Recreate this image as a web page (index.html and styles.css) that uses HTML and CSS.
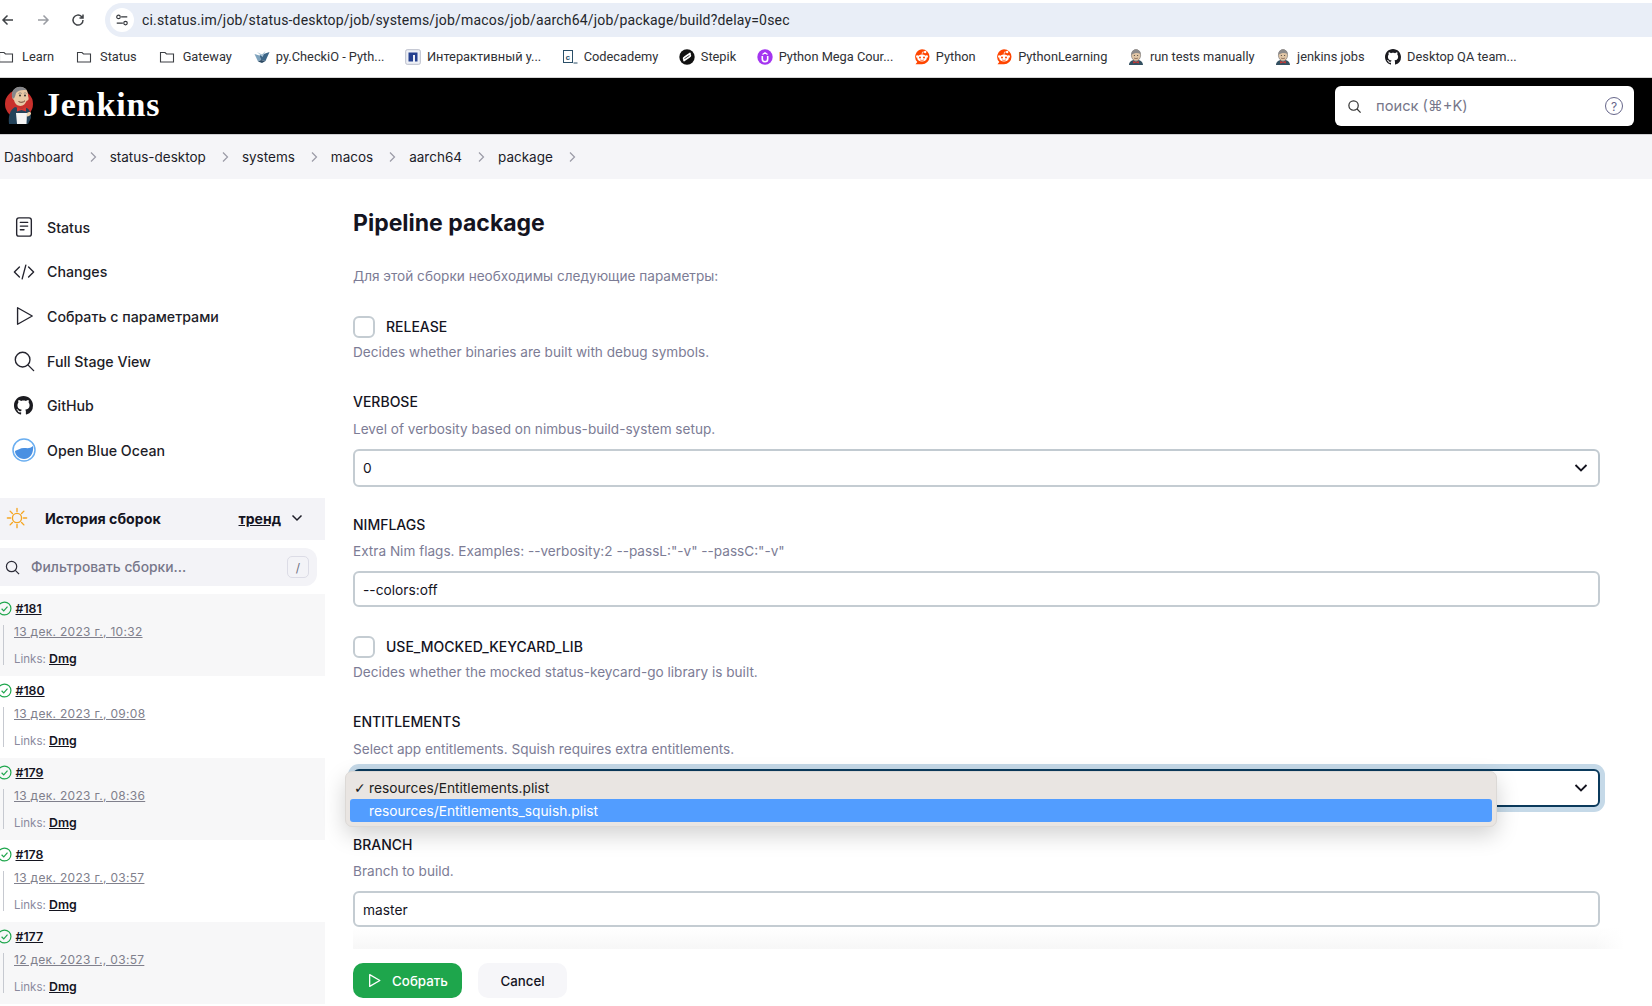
FILE: index.html
```html
<!DOCTYPE html>
<html lang="ru">
<head>
<meta charset="utf-8">
<title>package [Jenkins]</title>
<link rel="stylesheet" href="styles.css">
</head>
<body>
<div class="chrome">
  <div class="nav-btns">
    <svg class="nav-ic" viewBox="0 0 16 16"><path d="M13 8H3M7.500 3.500 3 8l4.500 4.500"/></svg>
    <svg class="nav-ic dim" viewBox="0 0 16 16"><path d="M3 8h10M8.500 3.500 13 8l-4.500 4.500"/></svg>
    <svg class="nav-ic" viewBox="0 0 16 16"><path d="M13 8a5 5 0 1 1-1.500-3.500L13 6M13 2.500V6H9.500"/></svg>
  </div>
  <div class="omnibox">
    <span class="site-ic"><svg viewBox="0 0 16 16"><path d="M7 4.500h7M2 11.500h7"/><circle cx="4" cy="4.500" r="2"/><circle cx="12" cy="11.500" r="2"/></svg></span>
    <span class="url">ci.status.im/job/status-desktop/job/systems/job/macos/job/aarch64/job/package/build?delay=0sec</span>
  </div>
</div>
<div class="bookmarks">
  <a class="bm first fold"><svg class="bi folder" viewBox="0 0 16 16"><path d="M1.500 3.500h4.500l1.500 1.500h7v8h-13z"/></svg>Learn</a>
  <a class="bm fold"><svg class="bi folder" viewBox="0 0 16 16"><path d="M1.500 3.500h4.500l1.500 1.500h7v8h-13z"/></svg>Status</a>
  <a class="bm fold"><svg class="bi folder" viewBox="0 0 16 16"><path d="M1.500 3.500h4.500l1.500 1.500h7v8h-13z"/></svg>Gateway</a>
  <a class="bm"><svg class="bi" viewBox="0 0 16 16"><path fill="#7fa3bd" d="M.5 5l5 1.500L7 11l-3 1.500z"/><path fill="#3d6688" d="M5.500 6.500 15.500 3l-4 9L7 11z"/><path fill="#a9c4d6" d="M3 3l5 2.500 3.500-3.500-3 6z"/><path fill="#2c4a63" d="M4 12.500 7 11l4.500 1-3.500 2z"/></svg>py.CheckiO - Pyth...</a>
  <a class="bm"><svg class="bi" viewBox="0 0 16 16"><rect x=".7" y=".7" width="14.600" height="14.600" rx="1.500" fill="#eef0f6" stroke="#b9bdca"/><path fill="#25408f" d="M3.500 3.500h9v9h-2.500V6H8v6.500H3.500z"/></svg>Интерактивный у...</a>
  <a class="bm"><svg class="bi" viewBox="0 0 16 16"><rect x="1.500" y="1.500" width="9" height="12" fill="#fff" stroke="#2a4f68"/><path d="M11.500 14H15.500" stroke="#2a4f68" fill="none"/><text x="3.500" y="10.500" class="cc">c</text></svg>Codecademy</a>
  <a class="bm"><svg class="bi" viewBox="0 0 16 16"><circle cx="8" cy="8" r="7.700" fill="#111"/><path fill="none" stroke="#fff" stroke-width="1.700" stroke-linecap="round" d="M11 4.500 5.500 8.300a1.400 1.400 0 0 0 .5 2.700M5 11.500 10.500 7.700a1.400 1.400 0 0 0-.5-2.700"/></svg>Stepik</a>
  <a class="bm"><svg class="bi" viewBox="0 0 16 16"><circle cx="8" cy="8" r="7.700" fill="#a435f0"/><path fill="none" stroke="#fff" stroke-width="1.600" d="M5.300 7v3a2.700 2.700 0 0 0 5.400 0V7"/><path fill="none" stroke="#fff" stroke-width="1.300" d="M5.500 5.500 8 3.800l2.500 1.700"/></svg>Python Mega Cour...</a>
  <a class="bm"><svg class="bi" viewBox="0 0 16 16"><use href="#reddit"/></svg>Python</a>
  <a class="bm"><svg class="bi" viewBox="0 0 16 16"><use href="#reddit"/></svg>PythonLearning</a>
  <a class="bm"><svg class="bi" viewBox="0 0 16 16"><use href="#butler"/></svg>run tests manually</a>
  <a class="bm"><svg class="bi" viewBox="0 0 16 16"><use href="#butler"/></svg>jenkins jobs</a>
  <a class="bm"><svg class="bi" viewBox="0 0 16 16"><use href="#gh"/></svg>Desktop QA team...</a>
</div>
<svg class="defs" aria-hidden="true">
  <defs>
    <symbol id="reddit" viewBox="0 0 16 16">
      <path fill="#ff4500" d="M8 .3a7.500 7.500 0 0 1 0 15H1.500l1.800-2.300A7.500 7.500 0 0 1 8 .3z"/>
      <circle cx="3.300" cy="7.500" r="1.300" fill="#fff"/><circle cx="12.700" cy="7.500" r="1.300" fill="#fff"/>
      <ellipse cx="8" cy="9" rx="4.800" ry="3.600" fill="#fff"/>
      <circle cx="6" cy="8.500" r="1" fill="#ff4500"/><circle cx="10" cy="8.500" r="1" fill="#ff4500"/>
      <circle cx="11.200" cy="3" r="1.200" fill="#fff"/>
      <path d="M8 5.500 8.500 3l2.700.0" fill="none" stroke="#fff" stroke-width=".7"/>
      <path d="M6 10.800c1 .8 3 .8 4 0" fill="none" stroke="#ff4500" stroke-width=".7"/>
    </symbol>
    <symbol id="butler" viewBox="0 0 16 16">
      <path fill="#335061" d="M1 16c0-3 2.500-4.500 4.500-5l2.500 1.500 2.500-1.500c2 .5 4.500 2 4.500 5z"/>
      <ellipse cx="8" cy="6.200" rx="4.600" ry="5.700" fill="#e0c5a5" stroke="#6d6b6d" stroke-width=".6"/>
      <path fill="#8c8a8a" d="M3.500 6C3 2 5.500.4 8 .4s5 1.600 4.500 4.600C10 3.500 6.500 3.500 3.500 6z"/>
      <path fill="#d33833" d="M5.200 12 8 13l2.800-1v2.500L8 13.500l-2.800 1z"/>
      <circle cx="6.300" cy="6.500" r=".5" fill="#222"/><circle cx="9.700" cy="6.500" r=".5" fill="#222"/>
      <path d="M6 9c1 .7 3 .7 4 0" fill="none" stroke="#6b4a3a" stroke-width=".6"/>
    </symbol>
    <symbol id="gh" viewBox="0 0 16 16">
      <path fill="#1b1b20" d="M8 0C3.580 0 0 3.580 0 8c0 3.540 2.290 6.530 5.470 7.590.4.070.55-.17.55-.38 0-.19-.01-.82-.01-1.490-2.010.37-2.530-.49-2.690-.94-.09-.23-.48-.94-.82-1.130-.28-.15-.68-.52-.01-.53.63-.01 1.080.58 1.230.82.720 1.210 1.870.87 2.330.66.070-.52.280-.87.510-1.070-1.780-.2-3.640-.89-3.640-3.950 0-.87.310-1.590.820-2.150-.08-.2-.36-1.020.08-2.120 0 0 .67-.21 2.200.82.640-.18 1.320-.27 2-.27s1.360.09 2 .27c1.530-1.040 2.200-.82 2.200-.82.44 1.100.16 1.920.08 2.120.51.560.82 1.270.82 2.150 0 3.070-1.870 3.750-3.650 3.950.29.250.54.730.54 1.480 0 1.070-.01 1.930-.01 2.200 0 .21.150.46.550.38A8.013 8.013 0 0 0 16 8c0-4.420-3.580-8-8-8z"/>
    </symbol>
  </defs>
</svg>
<header class="jk-head">
  <a class="brand">
    <svg class="butler-logo" viewBox="0 0 30 40">
      <circle cx="15" cy="18" r="14" fill="#c9302c"/>
      <path fill="#24435a" d="M5 38c-1-8 1-14 6-17l6 2 6-1c3 2 4 6 4 10l-3 6z"/>
      <path fill="#e8c9a6" d="M8 10C8 4 12 1 16 1s8 2 8 8c0 1.500 1 3 .5 4.500-.5 1-1.500 1-2 1.500-1 2.500-3 5-6 5-3.500 0-6-3-6.500-6C9 13.500 8 12 8 10z"/>
      <path fill="#85868a" d="M8 11C7 5 11 .8 16 .8c3 0 5.500 1.200 6.500 3.500C18 3.500 14 4.500 12 7c-.5 2-1 4-2 5.500-.8 0-1.700-.5-2-1.500z"/>
      <circle cx="16" cy="9.500" r=".9" fill="#222"/><circle cx="21" cy="9.500" r=".9" fill="#222"/>
      <path d="M14.500 15.500c2 1.300 5 1 6.500-.8" fill="none" stroke="#6b3f2f" stroke-width="1"/>
      <path fill="#e8e8e8" d="M14.500 7.500c1-.7 2.500-.7 3.200 0M19.800 7.300c1-.5 2-.5 2.700.2" stroke="#444" stroke-width=".5"/>
      <path fill="#d33833" d="M13 21l4.500 2 4.500-2v4.500L17.500 24 13 25.500z"/>
      <path fill="#f4f4f4" d="M12 27h11l-.5 11H13z"/>
      <path fill="#eed2ae" d="M23 27c2-1.500 4-1 4 .5s-2 3-4 3z"/>
    </svg>
    <span class="brand-name">Jenkins</span>
  </a>
  <div class="search">
    <svg class="ic-search" viewBox="0 0 16 16"><circle cx="7" cy="7" r="5"/><path d="m10.700 10.700 3.800 3.800"/></svg>
    <span class="search-ph">поиск (⌘+K)</span>
    <span class="help">?</span>
  </div>
</header>
<nav class="crumbs">
  <a>Dashboard</a><svg class="sep" viewBox="0 0 8 12"><path d="m2 1.500 4.500 4.500L2 10.500"/></svg>
  <a>status-desktop</a><svg class="sep" viewBox="0 0 8 12"><path d="m2 1.500 4.500 4.500L2 10.500"/></svg>
  <a>systems</a><svg class="sep" viewBox="0 0 8 12"><path d="m2 1.500 4.500 4.500L2 10.500"/></svg>
  <a>macos</a><svg class="sep" viewBox="0 0 8 12"><path d="m2 1.500 4.500 4.500L2 10.500"/></svg>
  <a>aarch64</a><svg class="sep" viewBox="0 0 8 12"><path d="m2 1.500 4.500 4.500L2 10.500"/></svg>
  <a>package</a><svg class="sep" viewBox="0 0 8 12"><path d="m2 1.500 4.500 4.500L2 10.500"/></svg>
</nav>
<div class="page">
  <aside class="side">
    <ul class="tasks">
      <li class="task"><span class="task-ic"><svg viewBox="0 0 24 24" class="line"><rect x="4" y="2" width="16" height="20" rx="2.500"/><path d="M8 7h8M8 11h8M8 15h4"/></svg></span>Status</li>
      <li class="task"><span class="task-ic"><svg viewBox="0 0 24 24" class="line"><path d="M7 6.500 1.500 12 7 17.500M17 6.500l5.500 5.500-5.500 5.500M14 4.500 10 19.500"/></svg></span>Changes</li>
      <li class="task"><span class="task-ic"><svg viewBox="0 0 24 24" class="line"><path d="M5 3 21 12 5 21z"/></svg></span>Собрать с параметрами</li>
      <li class="task"><span class="task-ic"><svg viewBox="0 0 24 24" class="line"><circle cx="10.500" cy="10.500" r="8"/><path d="m16.500 16.500 6 6"/></svg></span>Full Stage View</li>
      <li class="task"><span class="task-ic"><svg class="gh-ic" viewBox="0 0 16 16"><use href="#gh"/></svg></span>GitHub</li>
      <li class="task"><span class="task-ic"><svg viewBox="0 0 24 24"><circle cx="12" cy="12" r="11" fill="#fff" stroke="#6aaef0" stroke-width="1.500"/><path fill="#4a90e2" d="M3 13c3-1 5-3 9-3 3 0 6 1 9-2 1 7-3 13-9 13-5 0-9-4-9-8z"/></svg></span>Open Blue Ocean</li>
    </ul>
    <div class="hist-head">
      <svg class="sun" viewBox="0 0 24 24"><circle cx="12" cy="12" r="5"/><path d="M12 1.500v3.500M12 19v3.500M1.500 12H5M19 12h3.500M4.500 4.500 7 7M17 17l2.500 2.500M19.500 4.500 17 7M7 17l-2.500 2.500"/></svg>
      <span class="hist-title">История сборок</span>
      <a class="trend">тренд</a>
      <svg class="chev-sm" viewBox="0 0 12 12"><path d="m1.500 3.500 4.500 4.500 4.500-4.500"/></svg>
    </div>
    <div class="filter">
      <svg class="ic-search" viewBox="0 0 16 16"><circle cx="7" cy="7" r="5.500"/><path d="m11 11 4 4"/></svg>
      <span class="filter-ph">Фильтровать сборки...</span>
      <kbd class="kbd">/</kbd>
    </div>
    <div class="builds">
      <article class="build alt">
        <div class="b-top"><svg class="ok" viewBox="0 0 14 14"><circle cx="7" cy="7" r="6"/><path d="m4.300 7.200 2 2 3.500-4"/></svg><a class="b-num">#181</a></div>
        <div class="b-det"><a class="b-date">13 дек. 2023 г., 10:32</a><p class="b-links">Links: <a>Dmg</a></p></div>
      </article>
      <article class="build">
        <div class="b-top"><svg class="ok" viewBox="0 0 14 14"><circle cx="7" cy="7" r="6"/><path d="m4.300 7.200 2 2 3.500-4"/></svg><a class="b-num">#180</a></div>
        <div class="b-det"><a class="b-date">13 дек. 2023 г., 09:08</a><p class="b-links">Links: <a>Dmg</a></p></div>
      </article>
      <article class="build alt">
        <div class="b-top"><svg class="ok" viewBox="0 0 14 14"><circle cx="7" cy="7" r="6"/><path d="m4.300 7.200 2 2 3.500-4"/></svg><a class="b-num">#179</a></div>
        <div class="b-det"><a class="b-date">13 дек. 2023 г., 08:36</a><p class="b-links">Links: <a>Dmg</a></p></div>
      </article>
      <article class="build">
        <div class="b-top"><svg class="ok" viewBox="0 0 14 14"><circle cx="7" cy="7" r="6"/><path d="m4.300 7.200 2 2 3.500-4"/></svg><a class="b-num">#178</a></div>
        <div class="b-det"><a class="b-date">13 дек. 2023 г., 03:57</a><p class="b-links">Links: <a>Dmg</a></p></div>
      </article>
      <article class="build alt">
        <div class="b-top"><svg class="ok" viewBox="0 0 14 14"><circle cx="7" cy="7" r="6"/><path d="m4.300 7.200 2 2 3.500-4"/></svg><a class="b-num">#177</a></div>
        <div class="b-det"><a class="b-date">12 дек. 2023 г., 03:57</a><p class="b-links">Links: <a>Dmg</a></p></div>
      </article>
    </div>
  </aside>
  <main class="main">
    <div class="form">
      <h1 class="title">Pipeline package</h1>
      <p class="desc intro">Для этой сборки необходимы следующие параметры:</p>
      <div class="check-row"><span class="cb"></span><span class="lbl">RELEASE</span></div>
      <p class="desc after-check">Decides whether binaries are built with debug symbols.</p>
      <div class="lbl head">VERBOSE</div>
      <p class="desc sub">Level of verbosity based on nimbus-build-system setup.</p>
      <div class="field sel tall">0<svg class="chev" viewBox="0 0 14 10"><path d="m1.500 2 5.500 5.500L12.500 2"/></svg></div>
      <div class="lbl head">NIMFLAGS</div>
      <p class="desc sub">Extra Nim flags. Examples: --verbosity:2 --passL:"-v" --passC:"-v"</p>
      <div class="field">--colors:off</div>
      <div class="check-row"><span class="cb"></span><span class="lbl">USE_MOCKED_KEYCARD_LIB</span></div>
      <p class="desc after-check">Decides whether the mocked status-keycard-go library is built.</p>
      <div class="lbl head">ENTITLEMENTS</div>
      <p class="desc sub">Select app entitlements. Squish requires extra entitlements.</p>
      <div class="select-wrap">
        <div class="field sel focus"><svg class="chev" viewBox="0 0 14 10"><path d="m1.500 2 5.500 5.500L12.500 2"/></svg></div>
        <div class="menu">
          <div class="opt"><span class="tick">✓</span>resources/Entitlements.plist</div>
          <div class="opt hl">resources/Entitlements_squish.plist</div>
        </div>
      </div>
      <div class="lbl head">BRANCH</div>
      <p class="desc sub">Branch to build.</p>
      <div class="field">master</div>
    </div>
    <div class="actions">
      <button class="btn primary"><svg class="btn-ic" viewBox="0 0 14 14"><path d="M2.500 1.500 12 7l-9.500 5.500z"/></svg>Собрать</button>
      <button class="btn">Cancel</button>
    </div>
  </main>
</div>
</body>
</html>
```
FILE: styles.css
```css
* { box-sizing: border-box; }
html, body { margin: 0; padding: 0; }
body {
  width: 1652px;
  height: 1006px;
  overflow: hidden;
  background: #fff;
  color: #14141f;
  font-family: Inter, "Liberation Sans", sans-serif;
  font-size: 14px;
}
ul, p, h1 { margin: 0; padding: 0; }
.defs { display: none; }

.chrome { height: 37px; padding-top: 3px; display: flex; background: #fff; }
.nav-btns { width: 105px; display: flex; align-items: center; gap: 19px; }
.nav-ic { width: 16px; height: 16px; flex: none; fill: none; stroke: #3f4246; stroke-width: 1.500; }
.nav-ic.dim { stroke: #9a9da3; }
.omnibox { flex: 1; height: 34px; background: #e9eef7; border-radius: 17px 0 0 17px; display: flex; align-items: center; padding-left: 5px; }
.site-ic { width: 24px; height: 24px; border-radius: 50%; background: #fff; display: flex; align-items: center; justify-content: center; }
.site-ic svg { width: 14px; height: 14px; fill: none; stroke: #33363b; stroke-width: 1.300; }
.url { margin-left: 8px; font-size: 14px; color: #24262b; font-family: Roboto, sans-serif; letter-spacing: .18px; }

.bookmarks { height: 41px; display: flex; align-items: center; font-family: Roboto, sans-serif; font-size: 12.800px; color: #2f3136; padding-bottom: 1px; border-bottom: 1px solid #d6d6d6; }
.bm { display: flex; align-items: center; gap: 6px; margin-right: 20.500px; white-space: nowrap; }
.bm.fold { gap: 8px; margin-right: 22px; }
.bm.first { margin-left: -2px; }
.bi { width: 16px; height: 16px; flex: none; }
.bi.folder { fill: none; stroke: #3c3f44; stroke-width: 1.100; }
.cc { font: 700 8px "Liberation Mono", monospace; fill: #2a4f68; }

.jk-head { height: 57px; background: #000; display: flex; align-items: center; justify-content: space-between; padding-right: 18px; border-bottom: 1px solid #cfcfd2; }
.brand { display: flex; align-items: center; }
.butler-logo { width: 30px; height: 40px; margin-left: 4px; }
.brand-name { font-family: "Liberation Serif", serif; font-weight: 700; font-size: 34px; letter-spacing: .85px; color: #fff; margin: 0 0 2px 9px; }
.search { width: 299px; height: 40px; background: #fff; border-radius: 6px; display: flex; align-items: center; padding: 0 11px 0 12px; }
.search .ic-search { width: 15px; height: 15px; fill: none; stroke: #333; stroke-width: 1.300; }
.search-ph { margin-left: 14px; color: #77778a; font-size: 14.700px; flex: 1; }
.help { width: 18px; height: 18px; border: 1.500px solid #66668a; border-radius: 50%; font-size: 12px; color: #66668a; display: flex; align-items: center; justify-content: center; }

.crumbs { height: 44px; background: #f5f5f8; display: flex; align-items: center; padding-left: 4px; font-size: 13.500px; color: #1c1c28; }
.sep { width: 8px; height: 12px; margin: 0 13px 0 15px; fill: none; stroke: #9a9aa6; stroke-width: 1.200; }

.page { display: flex; height: 827px; }
.side { width: 325px; flex: none; padding-top: 26px; }
.tasks { list-style: none; display: flex; flex-direction: column; height: 293px; }
.task { height: 44.600px; flex: none; display: flex; align-items: center; font-size: 14.200px; font-weight: 500; color: #1d1d28; }
.task-ic { width: 47px; height: 24px; flex: none; display: flex; justify-content: center; align-items: center; }
.task-ic svg { width: 24px; height: 24px; }
.task-ic .line { width: 22px; height: 24px; fill: none; stroke: #24242e; stroke-width: 1.500; stroke-linecap: round; stroke-linejoin: round; }
.task-ic .gh-ic { width: 19px; height: 19px; }

.hist-head { height: 42px; background: #f3f3f7; display: flex; align-items: center; padding: 0 22px 2px 6px; }
.sun { width: 22px; height: 22px; fill: none; stroke: #f5a623; stroke-width: 1.500; stroke-linecap: round; }
.hist-title { margin-left: 17px; font-weight: 700; font-size: 14.200px; flex: 1; }
.trend { font-weight: 700; font-size: 14px; text-decoration: underline; }
.chev-sm { width: 12px; height: 12px; margin-left: 10px; fill: none; stroke: #1d1d28; stroke-width: 1.500; }

.filter { margin-top: 8px; width: 317px; height: 38px; background: #f3f3f7; border-radius: 0 12px 12px 0; display: flex; align-items: center; padding: 0 8px 0 5px; }
.filter .ic-search { width: 15px; height: 15px; fill: none; stroke: #2c2c38; stroke-width: 1.300; }
.filter-ph { margin-left: 11px; flex: 1; color: #77778a; font-size: 13.850px; font-weight: 500; }
.kbd { width: 22px; height: 22px; border: 1px solid #dcdce6; border-radius: 5px; display: flex; align-items: center; justify-content: center; font: 12px Inter, sans-serif; color: #6e6e80; }

.builds { margin-top: 8px; }
.build { height: 82px; padding-top: 6px; }
.build.alt { background: #f7f7f8; }
.b-top { display: flex; align-items: center; height: 16px; }
.ok { width: 15px; height: 15px; margin-left: -3px; fill: none; stroke: #1ea64c; stroke-width: 1.100; }
.b-num { margin-left: 3.500px; font-size: 12.300px; font-weight: 600; text-decoration: underline; color: #14141f; }
.b-det { margin: 10px 0 0 3px; padding-left: 10px; border-left: 1.500px solid #c6c9d0; height: 40px; }
.b-date { display: block; margin-top: -1px; font-size: 12px; color: #80808c; text-decoration: underline; letter-spacing: .3px; line-height: 14px; }
.b-links { margin-top: 13px; font-size: 11.500px; color: #8a8a9e; line-height: 14px; }
.b-links a { color: #14141f; font-weight: 600; text-decoration: underline; font-size: 12.300px; }

.main { flex: 1; display: flex; flex-direction: column; padding-left: 28px; min-width: 0; }
.form {
  flex: none;
  height: 770px;
  margin-right: 28px;
  padding: 30px 24px 0 0;
  background:
    linear-gradient(to right, rgba(255,255,255,0) calc(100% - 30px), #fff),
    linear-gradient(#fff 748px, #f7f7f7 770px);
}
.title { font-size: 23px; font-weight: 700; line-height: 28px; color: #14141f; }
.desc { font-size: 13.600px; color: #7c7c95; line-height: 18px; }
.intro { margin-top: 30px; }
.check-row { display: flex; align-items: center; margin-top: 29px; height: 22px; }
.intro + .check-row { margin-top: 31px; }
.cb { width: 22px; height: 22px; border: 2px solid #c4ccd2; border-radius: 6px; background: #fff; }
.lbl { font-size: 14px; font-weight: 500; color: #14141f; line-height: 18px; }
.check-row .lbl { margin-left: 11px; }
.after-check { margin-top: 5px; }
.head { margin-top: 29px; }
.after-check + .head { margin-top: 32px; }
.sub { margin-top: 8.500px; }
.field { height: 36px; margin-top: 11px; border: 2px solid #c4ccd2; border-radius: 6px; background: #fff; display: flex; align-items: center; padding: 1px 0 0 8px; font-size: 13.750px; color: #14141f; }
.sel { justify-content: space-between; padding: 0 10px 0 8px; }
.tall { height: 38px; }
.chev { width: 14px; height: 10px; margin-left: auto; fill: none; stroke: #14141f; stroke-width: 1.800; }
.select-wrap { position: relative; margin-top: 11px; }
.field.focus { margin-top: 0; height: 38px; border-color: #0b3a5c; box-shadow: 0 0 0 5px #c5d9e8; }
.menu { position: absolute; left: -8px; top: 2px; width: 1152px; height: 56px; background: #e9e5e2; border-radius: 7px; border: 1px solid #dcd9d6; box-shadow: 0 8px 22px rgba(0,0,0,.18); padding: 4px 4px 0; }
.opt { height: 23px; display: flex; align-items: center; padding: 1px 0 0 19px; font-size: 13.750px; position: relative; color: #1c1c1c; border-radius: 3px; }
.opt.hl { background: #529dff; color: #fff; }
.tick { position: absolute; left: 4px; font-size: 14px; font-family: "DejaVu Sans", sans-serif; }

.actions { flex: 1; display: flex; gap: 16px; padding-top: 14px; }
.btn { height: 35px; width: 89px; border: 0; border-radius: 10px; background: #f6f6f9; font: 500 13.300px Inter, sans-serif; color: #14141f; display: flex; align-items: center; justify-content: center; }
.btn.primary { width: 109px; background: #1ea64c; color: #fff; }
.btn-ic { width: 15px; height: 15px; margin-right: 10px; fill: none; stroke: #fff; stroke-width: 1.200; stroke-linejoin: round; }
```
